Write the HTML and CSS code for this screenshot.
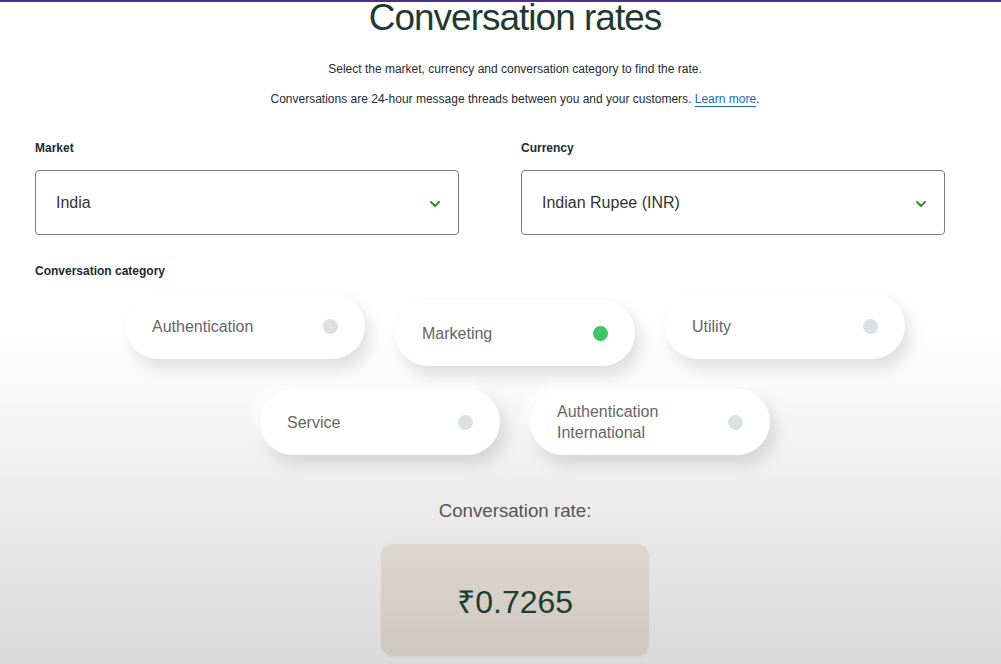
FILE: index.html
```html
<!DOCTYPE html>
<html lang="en">
<head>
<meta charset="utf-8">
<title>Conversation rates</title>
<link rel="stylesheet" href="styles.css">
</head>
<body>
<div class="page">
  <header class="intro">
    <h1 class="title">Conversation rates</h1>
    <p class="lead">Select the market, currency and conversation category to find the rate.</p>
    <p class="lead lead-2">Conversations are 24-hour message threads between you and your customers. <a class="link" href="#">Learn more</a>.</p>
  </header>

  <section class="selects">
    <div class="field">
      <div class="label">Market</div>
      <div class="select">
        <span class="select-value">India</span>
        <svg class="chev" width="12" height="8" viewBox="0 0 12 8"><path d="M2 2 L6 6 L10 2" fill="none" stroke="#2f8f2f" stroke-width="2" stroke-linecap="round" stroke-linejoin="round"/></svg>
      </div>
    </div>
    <div class="field">
      <div class="label">Currency</div>
      <div class="select">
        <span class="select-value">Indian Rupee (INR)</span>
        <svg class="chev" width="12" height="8" viewBox="0 0 12 8"><path d="M2 2 L6 6 L10 2" fill="none" stroke="#2f8f2f" stroke-width="2" stroke-linecap="round" stroke-linejoin="round"/></svg>
      </div>
    </div>
  </section>

  <div class="label cat-label">Conversation category</div>

  <section class="pills">
    <div class="pill-row">
      <div class="pill"><span class="pill-text">Authentication</span><span class="dot"></span></div>
      <div class="pill pill-active"><span class="pill-text">Marketing</span><span class="dot dot-on"></span></div>
      <div class="pill"><span class="pill-text">Utility</span><span class="dot"></span></div>
    </div>
    <div class="pill-row">
      <div class="pill"><span class="pill-text">Service</span><span class="dot"></span></div>
      <div class="pill"><span class="pill-text">Authentication<br>International</span><span class="dot"></span></div>
    </div>
  </section>

  <section class="result">
    <div class="result-label">Conversation rate:</div>
    <div class="rate-box"><span class="rate">₹0.7265</span></div>
  </section>
</div>
</body>
</html>
```

FILE: styles.css
```css
* { box-sizing: border-box; }

html, body {
  margin: 0;
  height: 664px;
  overflow: hidden;
}

body {
  font-family: "Liberation Sans", Arial, "Noto Sans", sans-serif;
  color: #1c2b33;
  border-top: 2px solid #4d2f86;
  background: linear-gradient(to bottom, #ffffff 0, #ffffff 330px, #dadada 664px);
}

.page {
  display: flex;
  flex-direction: column;
}

.intro {
  padding-left: 29px;
  text-align: center;
}

.title {
  margin: -2px 0 0;
  font-size: 37px;
  line-height: 36px;
  font-weight: 400;
  letter-spacing: -1px;
  color: #1e3b2f;
}

.lead {
  margin: 25px 0 0;
  font-size: 12px;
  line-height: 16px;
  color: #1c2b33;
}

.lead-2 { margin-top: 14px; }

.link {
  color: #1b6bb5;
  text-decoration: underline;
  text-underline-offset: 3px;
  text-decoration-thickness: 1px;
}

.selects {
  display: flex;
  gap: 62px;
  padding: 0 56px 0 35px;
  margin-top: 33px;
}

.field {
  flex: 1;
  display: flex;
  flex-direction: column;
  gap: 14px;
}

.label {
  font-size: 12px;
  line-height: 16px;
  font-weight: 700;
  color: #1c2b33;
}

.select {
  height: 65px;
  border: 1px solid #7a7a7a;
  border-radius: 4px;
  background: #fff;
  display: flex;
  align-items: center;
  justify-content: space-between;
  padding: 0 17px 0 20px;
}

.select-value {
  font-size: 16px;
  color: #333;
}

.chev { margin-top: 3px; }

.cat-label {
  margin: 28px 0 0 35px;
}

.pills {
  padding-left: 29px;
  margin-top: 14px;
  display: flex;
  flex-direction: column;
  align-items: center;
  gap: 30px;
}

.pill-row {
  display: flex;
  align-items: flex-start;
  gap: 30px;
}

.pill {
  width: 240px;
  height: 66px;
  border-radius: 33px;
  background: #fff;
  display: flex;
  align-items: center;
  justify-content: space-between;
  padding: 0 27px 0 27px;
  box-shadow: 6px 9px 16px rgba(0, 0, 0, 0.12), -5px -5px 12px rgba(255, 255, 255, 0.9);
}

.pill-active {
  margin-top: 7px;
  margin-bottom: -7px;
}

.pill-text {
  font-size: 16px;
  line-height: 21px;
  color: #666;
}

.dot {
  width: 15px;
  height: 15px;
  border-radius: 50%;
  background: #dde0e3;
  flex: none;
}

.dot-on { background: #3cc763; }

.result {
  padding-left: 29px;
  margin-top: 45px;
  display: flex;
  flex-direction: column;
  align-items: center;
}

.result-label {
  font-size: 18.7px;
  line-height: 22px;
  color: #555;
}

.rate-box {
  margin-top: 22px;
  width: 268px;
  height: 112px;
  border-radius: 12px;
  background: linear-gradient(to bottom, #ddd7d0, #cfc8c1);
  display: flex;
  align-items: center;
  justify-content: center;
  box-shadow: 0 1px 3px rgba(0, 0, 0, 0.05);
}

.rate {
  font-size: 32px;
  color: #1d3d2d;
}
```
